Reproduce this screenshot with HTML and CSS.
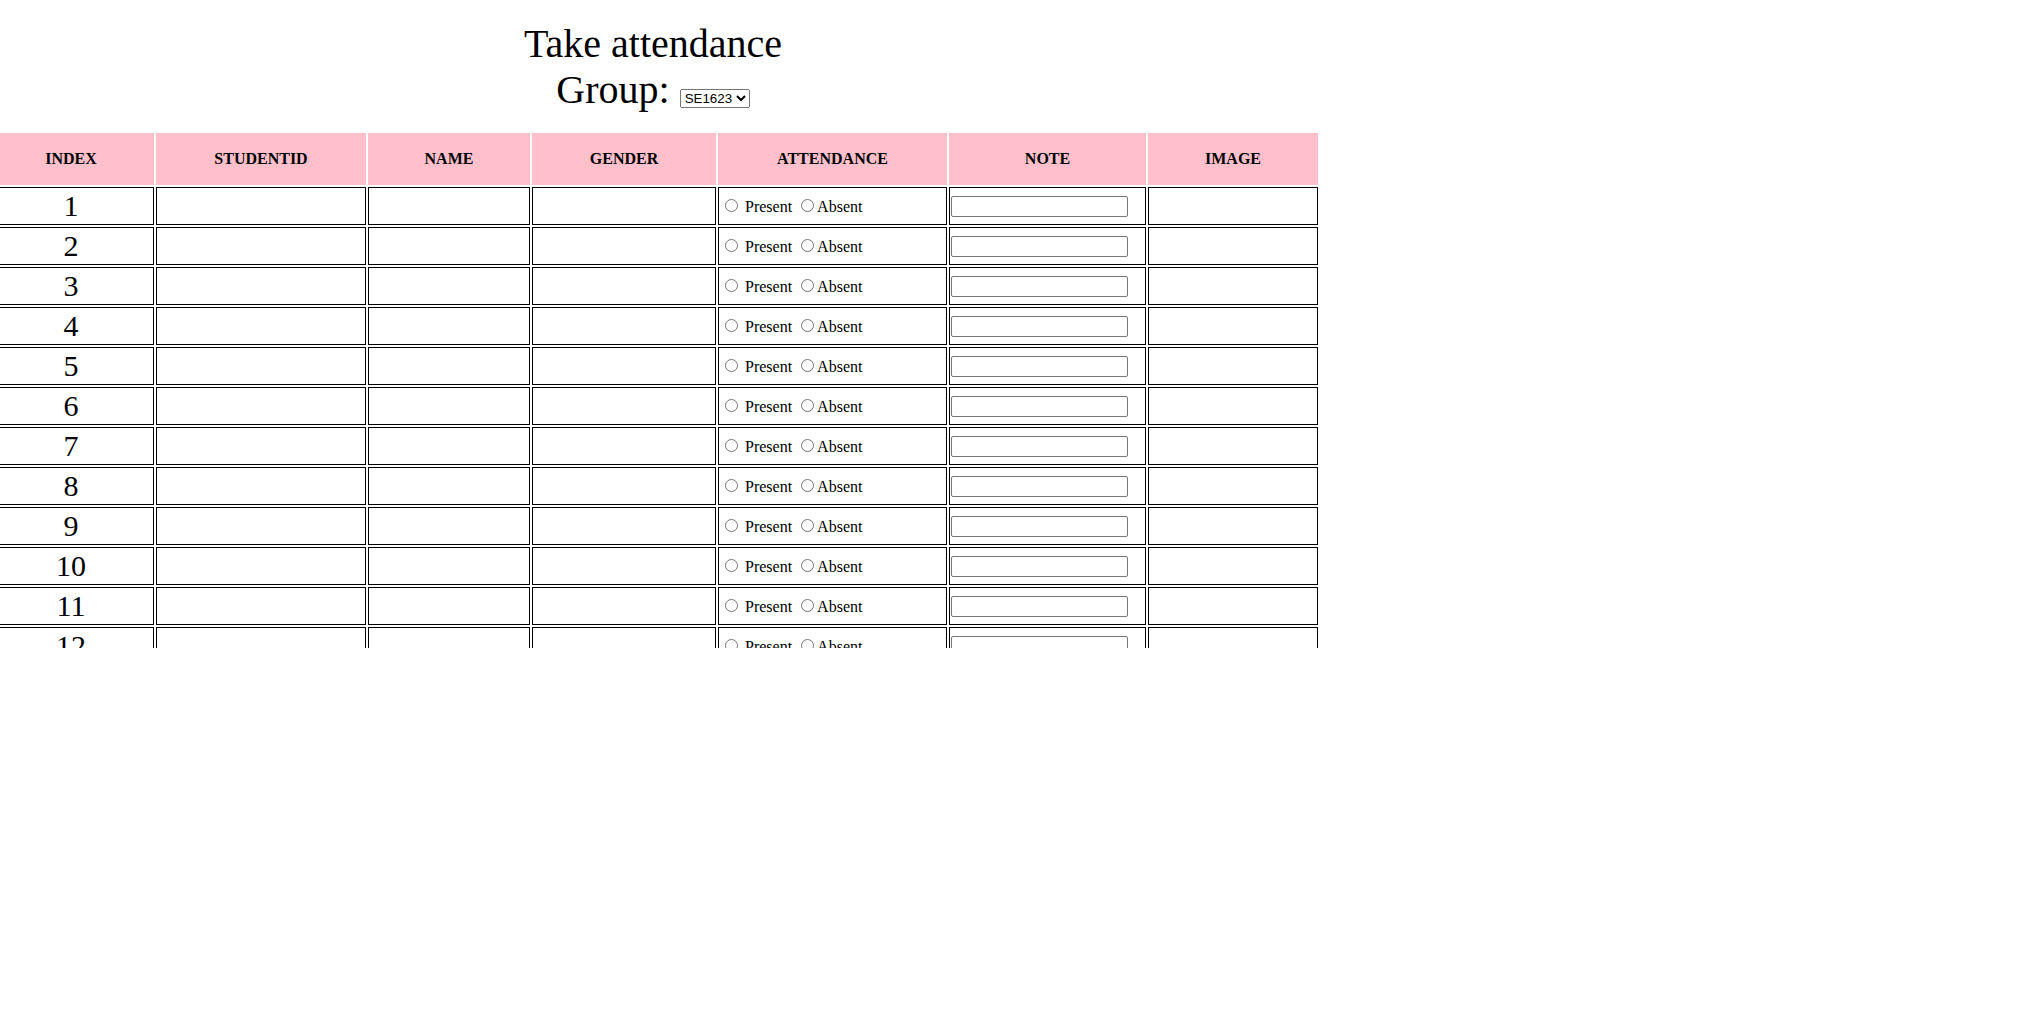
FILE: index.html
```html
<!DOCTYPE html>
<html lang="en">
<head>
<meta charset="utf-8">
<title>Take attendance</title>
<link rel="stylesheet" href="styles.css">
</head>
<body>
<div class="sheet">
  <div class="title">Take attendance</div>
  <div class="title">Group: <select class="group-select"><option>SE1623</option><option>SE1624</option></select></div>
  <table class="roster">
    <thead>
      <tr class="head-row">
        <th class="c1">INDEX</th>
        <th class="c2">STUDENTID</th>
        <th class="c3">NAME</th>
        <th class="c4">GENDER</th>
        <th class="c5">ATTENDANCE</th>
        <th class="c6">NOTE</th>
        <th class="c7">IMAGE</th>
      </tr>
    </thead>
    <tbody>
      <tr class="row"><td class="idx">1</td><td></td><td></td><td></td><td><input type="radio" name="a1"> Present <input type="radio" name="a1">Absent</td><td><input class="note-input" type="text"></td><td></td></tr>
      <tr class="row"><td class="idx">2</td><td></td><td></td><td></td><td><input type="radio" name="a2"> Present <input type="radio" name="a2">Absent</td><td><input class="note-input" type="text"></td><td></td></tr>
      <tr class="row"><td class="idx">3</td><td></td><td></td><td></td><td><input type="radio" name="a3"> Present <input type="radio" name="a3">Absent</td><td><input class="note-input" type="text"></td><td></td></tr>
      <tr class="row"><td class="idx">4</td><td></td><td></td><td></td><td><input type="radio" name="a4"> Present <input type="radio" name="a4">Absent</td><td><input class="note-input" type="text"></td><td></td></tr>
      <tr class="row"><td class="idx">5</td><td></td><td></td><td></td><td><input type="radio" name="a5"> Present <input type="radio" name="a5">Absent</td><td><input class="note-input" type="text"></td><td></td></tr>
      <tr class="row"><td class="idx">6</td><td></td><td></td><td></td><td><input type="radio" name="a6"> Present <input type="radio" name="a6">Absent</td><td><input class="note-input" type="text"></td><td></td></tr>
      <tr class="row"><td class="idx">7</td><td></td><td></td><td></td><td><input type="radio" name="a7"> Present <input type="radio" name="a7">Absent</td><td><input class="note-input" type="text"></td><td></td></tr>
      <tr class="row"><td class="idx">8</td><td></td><td></td><td></td><td><input type="radio" name="a8"> Present <input type="radio" name="a8">Absent</td><td><input class="note-input" type="text"></td><td></td></tr>
      <tr class="row"><td class="idx">9</td><td></td><td></td><td></td><td><input type="radio" name="a9"> Present <input type="radio" name="a9">Absent</td><td><input class="note-input" type="text"></td><td></td></tr>
      <tr class="row"><td class="idx">10</td><td></td><td></td><td></td><td><input type="radio" name="a10"> Present <input type="radio" name="a10">Absent</td><td><input class="note-input" type="text"></td><td></td></tr>
      <tr class="row"><td class="idx">11</td><td></td><td></td><td></td><td><input type="radio" name="a11"> Present <input type="radio" name="a11">Absent</td><td><input class="note-input" type="text"></td><td></td></tr>
      <tr class="row"><td class="idx">12</td><td></td><td></td><td></td><td><input type="radio" name="a12"> Present <input type="radio" name="a12">Absent</td><td><input class="note-input" type="text"></td><td></td></tr>
      <tr class="row"><td class="idx">13</td><td></td><td></td><td></td><td><input type="radio" name="a13"> Present <input type="radio" name="a13">Absent</td><td><input class="note-input" type="text"></td><td></td></tr>
    </tbody>
  </table>
</div>
</body>
</html>
```

FILE: styles.css
```css
html, body {
  margin: 0;
  padding: 0;
  background: #ffffff;
}

body {
  font-family: "Liberation Serif", "Times New Roman", serif;
  color: #000000;
}

.sheet {
  box-sizing: border-box;
  width: 1334px;
  margin-left: -14px;
  height: 648px;
  overflow: hidden;
  padding-top: 21px;
}

.title {
  font-size: 40px;
  line-height: 46px;
  text-align: center;
}

.group-select {
  font-family: "Liberation Sans", Arial, sans-serif;
  font-size: 13.33px;
  vertical-align: baseline;
}

.roster {
  margin-top: 18px;
  width: 1334px;
  table-layout: fixed;
  border-collapse: separate;
  border-spacing: 2px;
  font-size: 16px;
}

.roster th {
  background: #ffc0cb;
  border: 1px solid #ffc0cb;
  padding: 1px;
  font-weight: bold;
  font-size: 16px;
  text-align: center;
  vertical-align: middle;
}

.roster td {
  border: 1px solid #000000;
  padding: 1px;
  vertical-align: middle;
  text-align: left;
  white-space: nowrap;
}

.head-row {
  height: 52px;
}

.row {
  height: 38px;
}

.c1 { width: 162px; }
.c2 { width: 206px; }
.c3 { width: 158px; }
.c4 { width: 180px; }
.c5 { width: 225px; }
.c6 { width: 193px; }
.c7 { width: 166px; }

.roster td.idx {
  font-size: 30px;
  line-height: 34px;
  text-align: center;
}

.note-input {
  display: block;
  box-sizing: border-box;
  width: 177px;
  height: 21px;
  margin: 0;
  padding: 1px 2px;
  border: 1px solid #767676;
  border-radius: 2px;
  font-family: "Liberation Sans", Arial, sans-serif;
  font-size: 13.33px;
  background: #ffffff;
}
```
